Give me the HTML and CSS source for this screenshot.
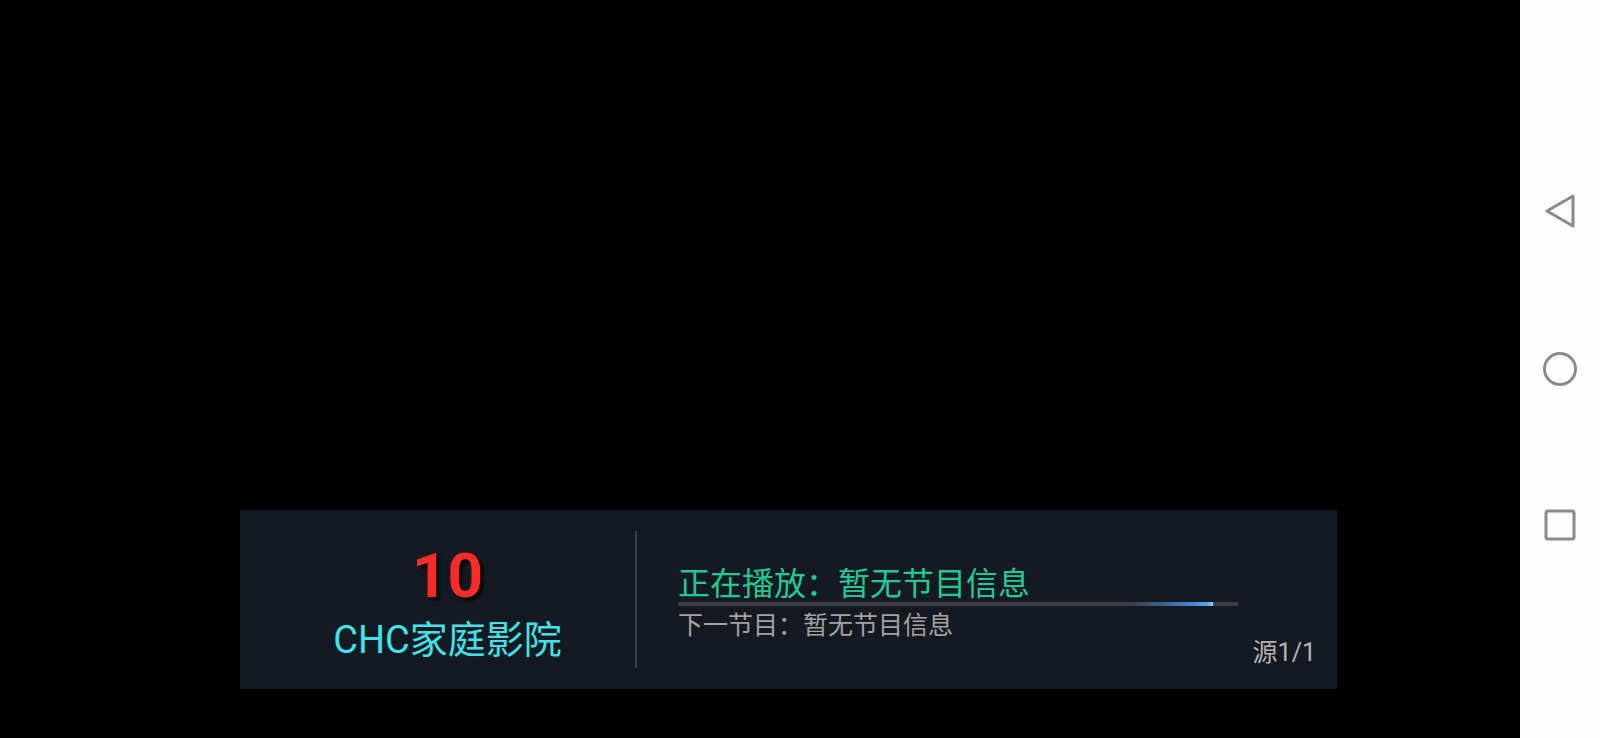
FILE: index.html
```html
<!DOCTYPE html>
<html lang="zh-CN">
<head>
<meta charset="utf-8">
<title>Player</title>
<link rel="stylesheet" href="styles.css">
</head>
<body>
<div class="screen">
  <main class="video">
    <section class="info-panel">
      <div class="channel">
        <div class="channel-num">10</div>
        <div class="channel-name">CHC家庭影院</div>
      </div>
      <div class="divider"></div>
      <div class="program">
        <div class="now">正在播放：暂无节目信息</div>
        <div class="progress"><div class="progress-fill"></div></div>
        <div class="next">下一节目：暂无节目信息</div>
        <div class="source">源1/1</div>
      </div>
    </section>
  </main>
  <nav class="navbar">
    <svg class="nav-icon" width="34" height="36" viewBox="0 0 34 36"><path d="M30 3 L4 18 L30 33 Z" fill="none" stroke="#8a8a8a" stroke-width="3" stroke-linejoin="round"/></svg>
    <svg class="nav-icon" width="36" height="36" viewBox="0 0 36 36"><circle cx="18" cy="18" r="15.5" fill="none" stroke="#8a8a8a" stroke-width="3"/></svg>
    <svg class="nav-icon" width="34" height="34" viewBox="0 0 34 34"><rect x="3" y="3" width="28" height="28" rx="2" fill="none" stroke="#8a8a8a" stroke-width="3"/></svg>
  </nav>
</div>
</body>
</html>
```

FILE: styles.css
```css
html, body {
  margin: 0;
  padding: 0;
  background: #000;
  font-family: Roboto, "Noto Sans CJK SC", sans-serif;
}

.screen {
  display: flex;
  width: 1600px;
  height: 738px;
}

.video {
  width: 1520px;
  height: 738px;
  background: #000;
  display: flex;
  flex-direction: column;
  justify-content: flex-end;
  padding: 0 0 49px 240px;
  box-sizing: border-box;
}

.info-panel {
  width: 1097px;
  height: 179px;
  background: #151921;
  display: flex;
  box-sizing: border-box;
}

.channel {
  width: 375px;
  padding-left: 20px;
  padding-top: 35px;
  display: flex;
  flex-direction: column;
  align-items: center;
}

.channel-num {
  font-size: 62px;
  line-height: 62px;
  font-weight: 700;
  color: #fa2b2b;
  text-shadow: 3px 3px 3px rgba(0, 0, 0, 0.9);
}

.channel-name {
  margin-top: 15px;
  font-size: 38px;
  line-height: 37px;
  color: #3fe4ea;
  white-space: nowrap;
}

.divider {
  width: 2px;
  margin: 21px 0;
  background: #3a3e46;
}

.program {
  flex: 1;
  padding: 58px 21px 0 41px;
  display: flex;
  flex-direction: column;
  align-items: flex-start;
}

.now {
  font-size: 32px;
  line-height: 32px;
  color: #21c996;
  white-space: nowrap;
}

.progress {
  margin-top: 2px;
  width: 560px;
  height: 4px;
  background: #3b3e45;
}

.progress-fill {
  width: 535px;
  height: 100%;
  background: linear-gradient(90deg, rgba(59, 62, 69, 0) 0%, rgba(59, 62, 69, 0) 85%, #3f86d6 96%, #55a8f4 99%, #8fd0ff 100%);
}

.next {
  margin-top: 7px;
  font-size: 25px;
  line-height: 25px;
  color: #a3a3a3;
  white-space: nowrap;
}

.source {
  align-self: flex-end;
  margin-top: 3px;
  font-size: 25px;
  line-height: 24px;
  color: #b4b4b4;
  white-space: nowrap;
}

.navbar {
  width: 80px;
  height: 738px;
  background: #fdfdfd;
  display: flex;
  flex-direction: column;
  align-items: center;
  padding-top: 193px;
  box-sizing: border-box;
}

.nav-icon {
  display: block;
}

.nav-icon:nth-child(2) {
  margin-top: 122px;
}

.nav-icon:nth-child(3) {
  margin-top: 121px;
}
```
